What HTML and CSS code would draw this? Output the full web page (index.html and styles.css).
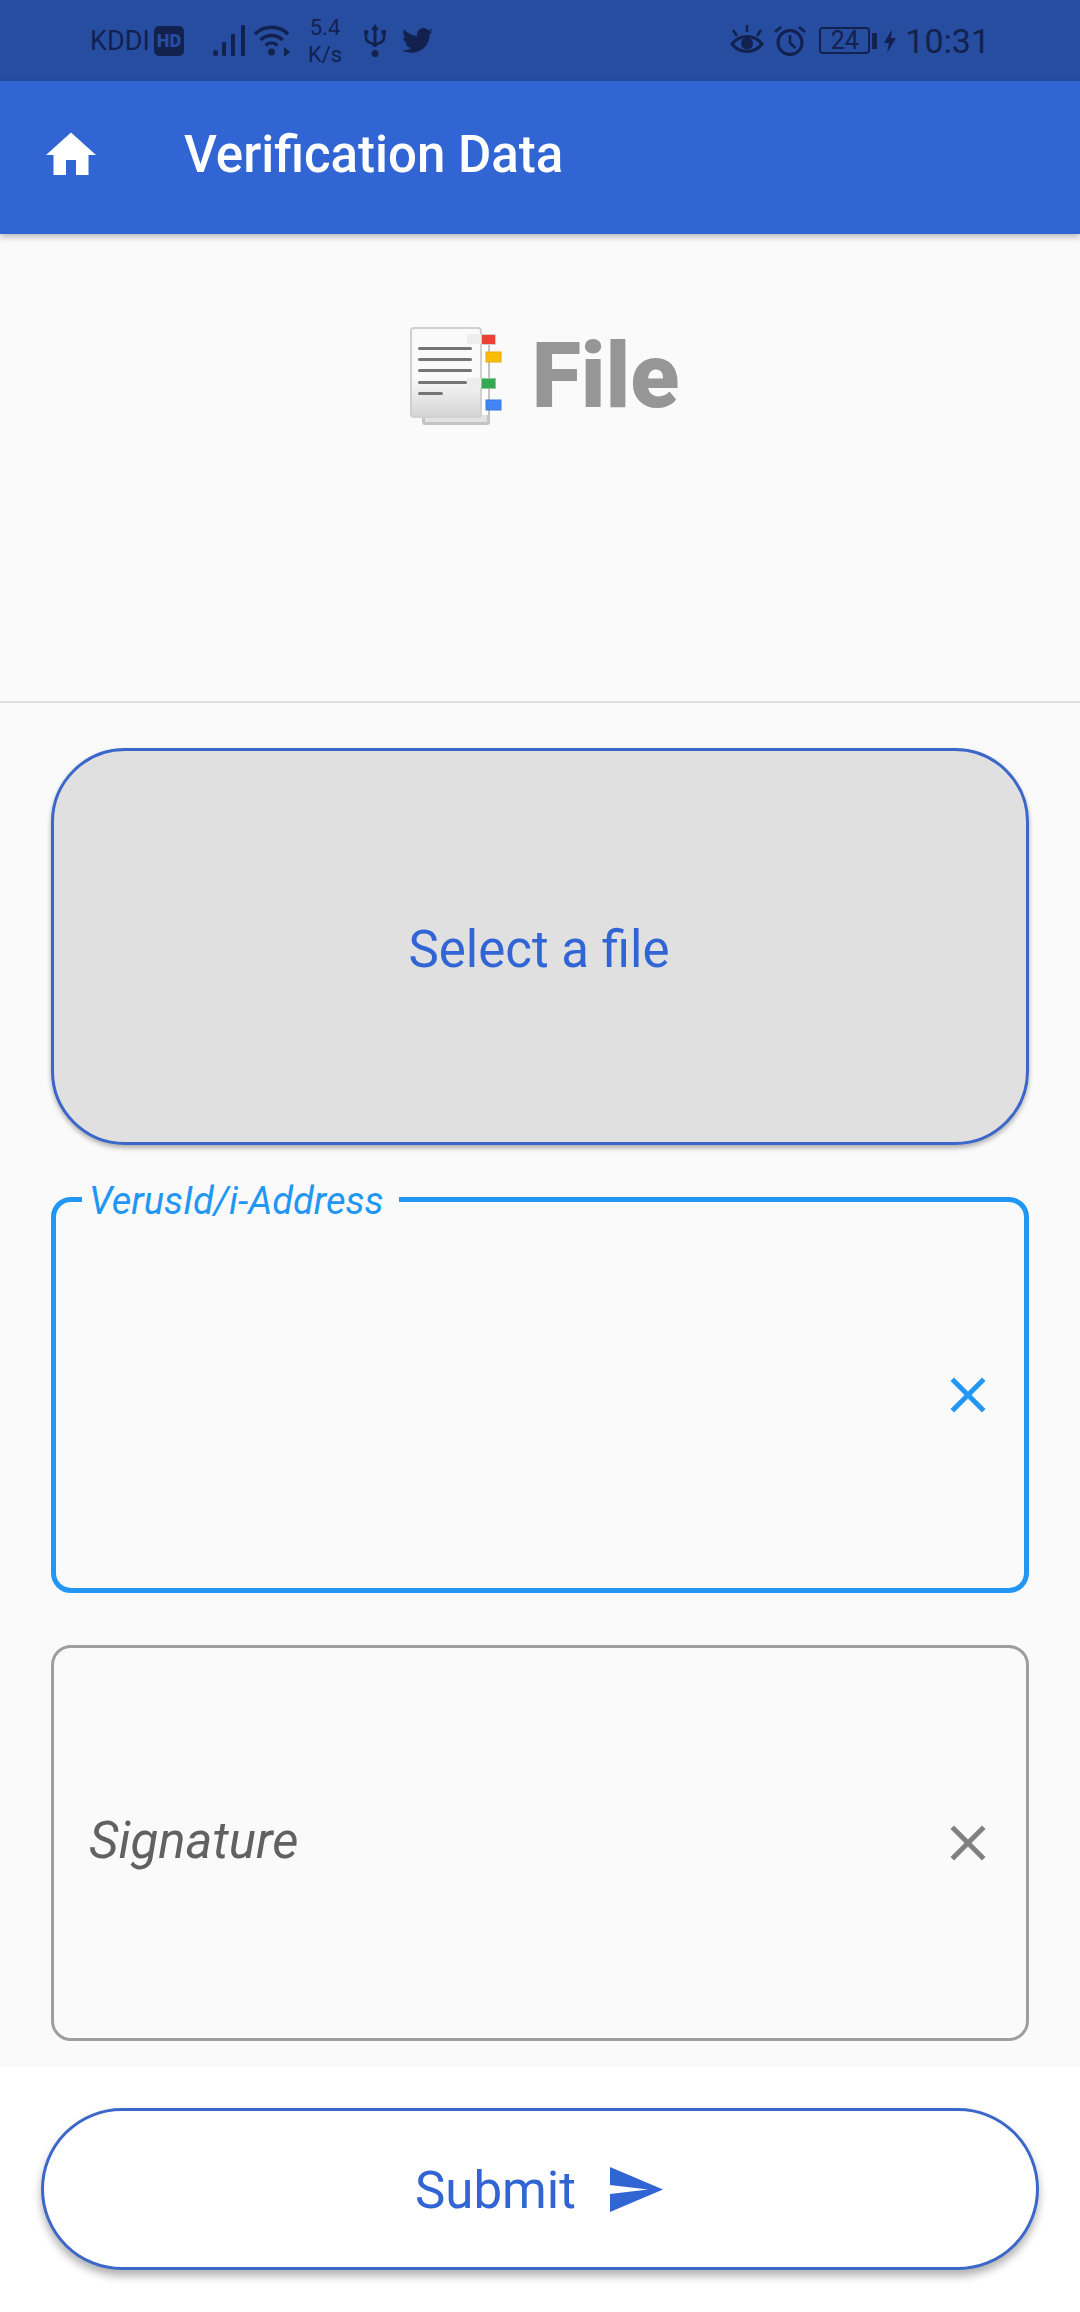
FILE: index.html
```html
<!DOCTYPE html>
<html>
<head>
	<meta charset="utf-8">
	<title>Verification Data</title>
	<link rel="stylesheet" href="styles.css">
</head>
<body>
  <div class="status-bar">
    <div class="status-left">
      <span class="carrier">KDDI</span>
      <span class="hd-badge">HD</span>
      <svg class="signal" width="32" height="32" viewBox="0 0 32 32"><rect x="0" y="25" width="5" height="6" rx="2.5"/><rect x="9" y="17" width="4" height="14" rx="1"/><rect x="18" y="9" width="4" height="22" rx="1"/><rect x="28" y="0" width="4" height="31" rx="1"/></svg>
      <svg class="wifi" width="37" height="32" viewBox="0 0 37 32"><path d="M2 9C11 0 26 0 35 9" fill="none" stroke="#13214f" stroke-width="3.4"/><path d="M7.5 15C13.5 9 23.5 9 29.5 15" fill="none" stroke="#13214f" stroke-width="3.4"/><path d="M12.5 20.5C16 17 21 17 24.500 20.500" fill="none" stroke="#13214f" stroke-width="3.4"/><circle cx="18.500" cy="27" r="3.400"/><path d="M31 22l6 5-6 5z"/></svg>
      <span class="speed">5.4<br>K/s</span>
      <svg class="usb" width="22" height="33" viewBox="0 0 22 33"><path d="M11 0l4 6h-2.500v17h-3V6H7z"/><circle cx="11" cy="29.500" r="3.500"/><path d="M2 9v5c0 3 2 4 9 7 7-3 9-4 9-7V9" fill="none" stroke="#13214f" stroke-width="2.600"/><rect x="0" y="6" width="4.500" height="4.500" rx="2"/><rect x="17.500" y="6" width="4.500" height="4.500"/></svg>
      <svg class="twitter" width="31" height="26" viewBox="0 0 24 20"><path d="M24 2.400c-.9.400-1.800.700-2.800.800 1-.6 1.800-1.600 2.200-2.700-1 .6-2 1-3.100 1.200C19.300.7 18 0 16.600 0c-2.700 0-4.900 2.200-4.900 4.900 0 .4 0 .8.100 1.100C7.700 5.800 4.100 3.900 1.700.9c-.4.700-.7 1.600-.7 2.500 0 1.700.9 3.200 2.200 4.100-.8 0-1.600-.2-2.200-.6v.1c0 2.400 1.700 4.400 3.900 4.800-.4.100-.8.200-1.300.2-.3 0-.6 0-.9-.1.600 2 2.400 3.400 4.600 3.400-1.700 1.300-3.800 2.100-6.100 2.100-.4 0-.8 0-1.200-.1C2.200 18.300 4.800 19 7.500 19c9.100 0 14-7.500 14-14v-.6c1-.7 1.800-1.600 2.500-2z"/></svg>
    </div>
    <div class="status-right">
      <svg class="eye" width="34" height="31" viewBox="0 0 34 31"><path d="M2 19C10 9 24 9 32 19 24 29 10 29 2 19z" fill="none" stroke="#13214f" stroke-width="3"/><circle cx="17" cy="18.500" r="6"/><path d="M17 0v7M3 5l4 6M31 5l-4 6" fill="none" stroke="#13214f" stroke-width="2.600"/></svg>
      <svg class="alarm" width="32" height="31" viewBox="0 0 32 31"><circle cx="16" cy="17.500" r="12" fill="none" stroke="#13214f" stroke-width="3"/><path d="M16 10v8l5.500 5M1 7l6-5M31 7l-6-5" fill="none" stroke="#13214f" stroke-width="2.600"/></svg>
      <span class="battery">24</span>
      <span class="battery-nib"></span>
      <svg class="bolt" width="12" height="24" viewBox="0 0 12 24"><path d="M8 0L0 14h5l-2 10 9-15H7z"/></svg>
      <span class="clock">10:31</span>
    </div>
  </div>

  <div class="app-bar">
    <svg class="home-icon" width="60" height="60" viewBox="0 0 24 24"><path d="M10 20v-6h4v6h5v-8h3L12 3 2 12h3v8z"/></svg>
    <span class="app-title">Verification Data</span>
  </div>

  <div class="type-header">
    <svg class="file-icon" width="92" height="100" viewBox="0 0 92 100">
      <defs><linearGradient id="sheet" x1="0" y1="0" x2="0" y2="1"><stop offset="0.550" stop-color="#fafafa"/><stop offset="1" stop-color="#d4d4d4"/></linearGradient></defs>
      <rect x="12" y="8" width="68" height="90" rx="3" fill="#c4c4c4"/>
      <rect x="15" y="10" width="62" height="85" fill="#e2e2e2"/>
      <rect x="70" y="8" width="8" height="80" fill="#fff"/>
      <rect x="76" y="25" width="15" height="10" fill="#fbbc05" stroke="#e5ab0a"/>
      <rect x="76" y="73" width="15" height="10" fill="#4285f4" stroke="#3a78dc"/>
      <rect x="1" y="1" width="70" height="89" rx="3" fill="url(#sheet)" stroke="#d0d0d0" stroke-width="2"/>
      <rect x="57" y="7" width="14" height="10" fill="#ededed"/>
      <rect x="57" y="51" width="14" height="10" fill="#ededed"/>
      <rect x="71.500" y="7.500" width="14" height="10" fill="#ea4335" stroke="#d0d0d0"/>
      <rect x="71.500" y="51.500" width="14" height="10" fill="#34a853" stroke="#8fc79f"/>
      <rect x="8" y="20" width="54" height="3" rx="1.500" fill="#757575"/>
      <rect x="8" y="31" width="54" height="3" rx="1.500" fill="#757575"/>
      <rect x="8" y="42" width="54" height="3" rx="1.500" fill="#757575"/>
      <rect x="8" y="54" width="49" height="3" rx="1.500" fill="#757575"/>
      <rect x="8" y="65" width="25" height="3" rx="1.500" fill="#757575"/>
    </svg>
    <span class="type-name">File</span>
  </div>

  <div class="form-area">
    <div class="select-file"><span class="select-text">Select a file</span></div>

    <div class="field field-focus">
      <label class="field-label">VerusId/i-Address</label>
      <svg class="clear-icon" width="60" height="60" viewBox="0 0 24 24"><path d="M19 6.410L17.590 5 12 10.590 6.410 5 5 6.410 10.590 12 5 17.590 6.410 19 12 13.410 17.590 19 19 17.590 13.410 12z"/></svg>
    </div>

    <div class="field">
      <span class="field-placeholder">Signature</span>
      <svg class="clear-icon" width="60" height="60" viewBox="0 0 24 24"><path d="M19 6.410L17.590 5 12 10.590 6.410 5 5 6.410 10.590 12 5 17.590 6.410 19 12 13.410 17.590 19 19 17.590 13.410 12z"/></svg>
    </div>
  </div>

  <div class="footer">
    <div class="submit-btn">
      <span class="submit-text">Submit</span>
      <svg class="send-icon" width="53" height="45" viewBox="0 0 53 45"><path d="M0 0L53 22.500 0 45V27L38 22.500 0 18z"/></svg>
    </div>
  </div>
</body>
</html>
```

FILE: styles.css
```css
* {
	box-sizing: border-box;
}
body {
	font-family: Roboto, "Liberation Sans", sans-serif;
	margin: 0;
	padding: 0;
	width: 1080px;
	height: 2312px;
	display: flex;
	flex-direction: column;
	background: #fafafa;
	overflow: hidden;
}

/* status bar */
.status-bar {
	height: 81px;
	flex: none;
	background: #264da0;
	color: #13214f;
	display: flex;
	justify-content: space-between;
	align-items: center;
	padding: 0 90px 0 90px;
}
.status-bar svg {
	fill: #13214f;
	flex: none;
}
.status-left,
.status-right {
	display: flex;
	align-items: center;
}
.carrier {
	font-size: 27px;
	width: 64px;
}
.hd-badge {
	width: 30px;
	height: 30px;
	border-radius: 5px;
	background: #13214f;
	color: #264da0;
	font-size: 18px;
	font-weight: 900;
	line-height: 30px;
	text-align: center;
}
.signal {
	margin-left: 29px;
}
.wifi {
	margin-left: 8px;
}
.speed {
	font-size: 22px;
	line-height: 27px;
	width: 36px;
	margin-left: 17px;
	text-align: center;
}
.usb {
	margin-left: 21px;
}
.twitter {
	margin-left: 16px;
}
.eye {
	margin-right: 10px;
}
.alarm {
	margin-right: 13px;
}
.battery {
	width: 51px;
	height: 27px;
	border: 2px solid #13214f;
	border-radius: 4px;
	font-size: 25px;
	line-height: 23px;
	text-align: center;
}
.battery-nib {
	width: 5px;
	height: 16px;
	margin-left: 2px;
	background: #13214f;
	border-radius: 1px;
}
.bolt {
	margin-left: 7px;
}
.clock {
	font-size: 34px;
	margin-left: 9px;
}

/* app bar */
.app-bar {
	height: 153px;
	flex: none;
	background: #3165d4;
	display: flex;
	align-items: center;
	padding-left: 41px;
	position: relative;
	box-shadow: 0 3px 6px rgba(0, 0, 0, 0.25);
}
.home-icon {
	fill: #fff;
	margin-bottom: 6px;
}
.app-title {
	color: #fff;
	font-size: 51px;
	font-weight: 500;
	margin-left: 83px;
	margin-bottom: 6px;
}

/* selected verification type */
.type-header {
	height: 469px;
	flex: none;
	border-bottom: 2px solid #e0e0e0;
	display: flex;
	justify-content: center;
	align-items: flex-start;
	padding-top: 93px;
	padding-left: 9px;
}
.type-name {
	color: #969696;
	font-size: 90px;
	font-weight: 900;
	line-height: 100px;
	margin-left: 30px;
}

/* form */
.form-area {
	height: 1364px;
	flex: none;
	padding: 45px 51px 0;
	display: flex;
	flex-direction: column;
	gap: 52px;
}
.select-file {
	height: 397px;
	flex: none;
	background: #e0e0e0;
	border: 3px solid #3a67c9;
	border-radius: 74px;
	box-shadow: 0 3px 5px rgba(0, 0, 0, 0.3);
	color: #3165d4;
	font-size: 51px;
	display: flex;
	justify-content: center;
	align-items: center;
}
.select-text {
	margin-top: 5px;
	margin-right: 2px;
}
.field {
	height: 396px;
	flex: none;
	border: 3px solid #9e9e9e;
	border-radius: 20px;
	position: relative;
	display: flex;
	align-items: center;
	justify-content: space-between;
	padding: 0 28px 0 35px;
}
.field-focus {
	border: 5px solid #2196f3;
	justify-content: flex-end;
	padding: 0 26px 0 34px;
}
.field-label {
	position: absolute;
	top: -25px;
	left: 26px;
	padding: 0 15px 0 7px;
	background: #fafafa;
	color: #2196f3;
	font-size: 38px;
	font-style: italic;
	line-height: 48px;
}
.field-placeholder {
	color: #616161;
	font-size: 51px;
	font-style: italic;
	margin-bottom: 6px;
}
.clear-icon {
	fill: #808080;
}
.field-focus .clear-icon {
	fill: #2196f3;
}

/* bottom bar */
.footer {
	flex: 1;
	background: #fff;
	padding: 41px 41px 0;
}
.submit-btn {
	height: 162px;
	background: #fff;
	border: 3px solid #3a67c9;
	border-radius: 81px;
	box-shadow: 0 6px 8px rgba(0, 0, 0, 0.3);
	display: flex;
	justify-content: center;
	align-items: center;
	padding-right: 2px;
}
.submit-text {
	color: #3165d4;
	font-size: 51px;
	margin-top: 2px;
}
.send-icon {
	fill: #3165d4;
	margin-left: 34px;
}
```
